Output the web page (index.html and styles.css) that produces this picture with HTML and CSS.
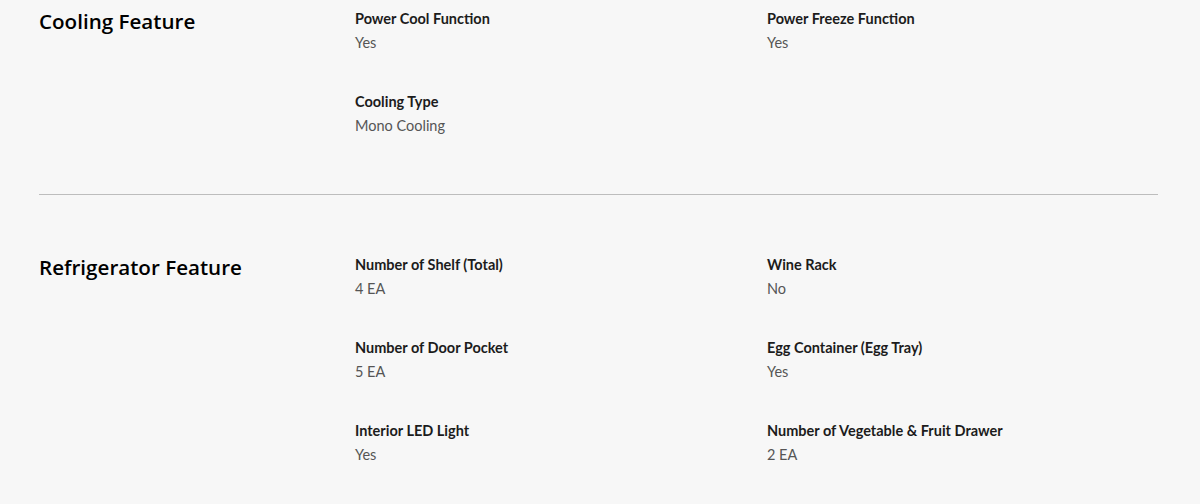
FILE: index.html
```html
<!DOCTYPE html>
<html lang="en">
<head>
<meta charset="utf-8">
<title>Specs</title>
<link rel="stylesheet" href="styles.css">
</head>
<body>
<div class="specs">
  <section class="spec-section first">
    <h2 class="spec-title">Cooling Feature</h2>
    <ul class="spec-grid">
      <li class="spec-item"><p class="spec-label">Power Cool Function</p><p class="spec-value">Yes</p></li>
      <li class="spec-item"><p class="spec-label">Power Freeze Function</p><p class="spec-value">Yes</p></li>
      <li class="spec-item"><p class="spec-label">Cooling Type</p><p class="spec-value">Mono Cooling</p></li>
    </ul>
  </section>
  <section class="spec-section">
    <h2 class="spec-title">Refrigerator Feature</h2>
    <ul class="spec-grid">
      <li class="spec-item"><p class="spec-label">Number of Shelf (Total)</p><p class="spec-value">4 EA</p></li>
      <li class="spec-item"><p class="spec-label">Wine Rack</p><p class="spec-value">No</p></li>
      <li class="spec-item"><p class="spec-label">Number of Door Pocket</p><p class="spec-value">5 EA</p></li>
      <li class="spec-item"><p class="spec-label">Egg Container (Egg Tray)</p><p class="spec-value">Yes</p></li>
      <li class="spec-item"><p class="spec-label">Interior LED Light</p><p class="spec-value">Yes</p></li>
      <li class="spec-item"><p class="spec-label">Number of Vegetable &amp; Fruit Drawer</p><p class="spec-value">2 EA</p></li>
    </ul>
  </section>
</div>
</body>
</html>
```
FILE: styles.css
```css
html, body {
  margin: 0;
  padding: 0;
  background: #f7f7f7;
}
body {
  font-family: "Lato", "Open Sans", sans-serif;
  color: #1a1a1a;
}
.specs {
  width: 1119px;
  margin-left: 39px;
}
.spec-section {
  display: flex;
  padding: 60px 0 56px;
  border-top: 1px solid #bdbdbd;
}
.spec-section.first {
  padding-top: 9px;
  border-top: none;
}
.spec-title {
  width: 316px;
  flex: none;
  margin: -2px 0 0;
  font-family: "Open Sans", "Lato", sans-serif;
  font-size: 20.6px;
  line-height: 28px;
  font-weight: 600;
  color: #000;
}
.spec-grid {
  flex: 1;
  margin: 0;
  padding: 0;
  list-style: none;
  display: grid;
  grid-template-columns: 412px 1fr;
  row-gap: 37px;
}
.spec-label {
  margin: 0;
  font-size: 14.5px;
  line-height: 20px;
  font-weight: 700;
  color: #1c1c1c;
}
.spec-value {
  margin: 2px 0 0;
  font-size: 14.5px;
  line-height: 24px;
  color: #555;
}
```
